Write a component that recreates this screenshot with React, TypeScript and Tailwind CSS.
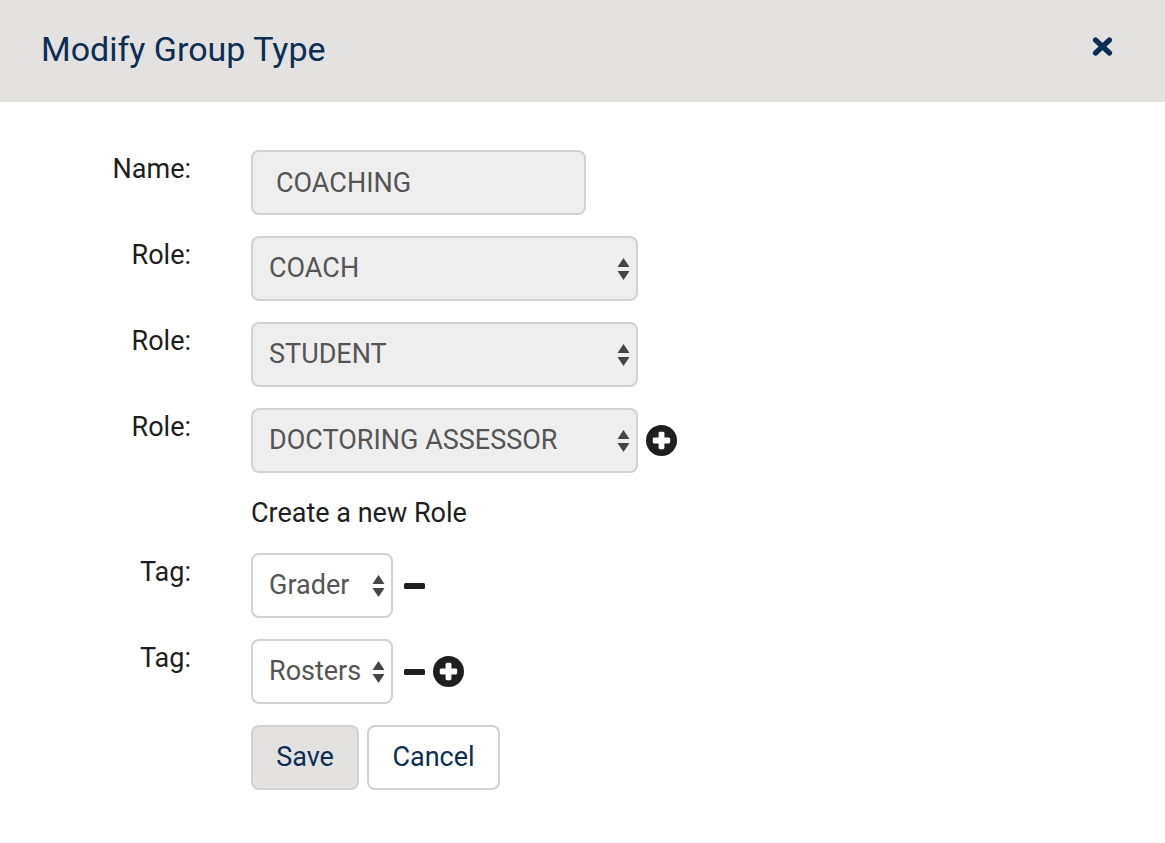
import React from "react";

const NAVY = "text-[#0e2d52]";

const SelectArrows = () => (
  <svg width="13" height="23" viewBox="0 0 13 23" className="fill-[#454545]">
    <polygon points="0.5,9.5 6.5,0.5 12.5,9.5" />
    <polygon points="0.5,13.5 12.5,13.5 6.5,22.5" />
  </svg>
);

const PlusCircle = () => (
  <svg width="31" height="31" viewBox="0 0 32 32">
    <circle cx="16" cy="16" r="16" fill="#1f1f1f" />
    <rect x="7" y="13" width="18" height="6" rx="1.5" fill="#fff" />
    <rect x="13" y="7" width="6" height="18" rx="1.5" fill="#fff" />
  </svg>
);

const Minus = () => (
  <svg width="21" height="6" viewBox="0 0 21 6">
    <rect x="0" y="0" width="21" height="6" rx="1.5" fill="#1f1f1f" />
  </svg>
);

const CloseIcon = () => (
  <svg width="21" height="19" viewBox="0 0 21 19">
    <path
      d="M3.5 3 L17.5 16 M17.5 3 L3.5 16"
      stroke="#0e2d52"
      strokeWidth="5.2"
      strokeLinecap="round"
    />
  </svg>
);

const Row = ({ label, children }: { label: string; children: React.ReactNode }) => (
  <div className="flex items-start">
    <div className="w-[191px] text-right text-[27px] leading-[38px] text-[#1e1e1e]">{label}</div>
    <div className="ml-[60px] flex items-center">{children}</div>
  </div>
);

const Select = ({
  value,
  width,
  filled,
}: {
  value: string;
  width: string;
  filled?: boolean;
}) => (
  <div className={`relative ${width}`}>
    <select
      defaultValue={value}
      className={`h-[65px] w-full appearance-none rounded-[8px] border-2 border-[#d2d2d2] pl-[16px] pr-[30px] text-[27px] text-[#555] outline-none ${
        filled ? "bg-[#eeeeee]" : "bg-white"
      }`}
    >
      <option>{value}</option>
    </select>
    <div className="pointer-events-none absolute right-[8px] top-1/2 -translate-y-1/2 flex">
      <SelectArrows />
    </div>
  </div>
);

const App = () => {
  return (
    <div className="h-[843px] w-full bg-white font-['Roboto','Liberation_Sans',sans-serif]">
      <div className="flex h-[102px] items-center justify-between bg-[#e3e2e0] pb-[4px] pl-[41px] pr-[52px]">
        <h1 className={`text-[34px] leading-none ${NAVY}`}>Modify Group Type</h1>
        <button className="mb-[6px] flex">
          <CloseIcon />
        </button>
      </div>

      <div className="flex flex-col gap-[21px] pt-[48px]">
        <Row label="Name:">
          <input
            readOnly
            value="COACHING"
            className="h-[65px] w-[335px] rounded-[8px] border-2 border-[#d2d2d2] bg-[#eeeeee] px-[23px] text-[27px] text-[#555] outline-none"
          />
        </Row>
        <Row label="Role:">
          <Select value="COACH" width="w-[387px]" filled />
        </Row>
        <Row label="Role:">
          <Select value="STUDENT" width="w-[387px]" filled />
        </Row>
        <Row label="Role:">
          <Select value="DOCTORING ASSESSOR" width="w-[387px]" filled />
          <div className="ml-[8px] flex">
            <PlusCircle />
          </div>
        </Row>

        <div className="ml-[251px] text-[27px] leading-[38px] text-[#1e1e1e]">Create a new Role</div>

        <Row label="Tag:">
          <Select value="Grader" width="w-[142px]" />
          <div className="ml-[11px] flex">
            <Minus />
          </div>
        </Row>
        <Row label="Tag:">
          <Select value="Rosters" width="w-[142px]" />
          <div className="ml-[11px] flex">
            <Minus />
          </div>
          <div className="ml-[8px] flex">
            <PlusCircle />
          </div>
        </Row>

        <div className="ml-[251px] flex gap-[8px]">
          <button
            className={`h-[65px] w-[108px] rounded-[8px] border-2 border-[#d2d2d2] bg-[#e3e2e0] text-[27px] ${NAVY}`}
          >
            Save
          </button>
          <button
            className={`h-[65px] w-[133px] rounded-[8px] border-2 border-[#d2d2d2] bg-white text-[27px] ${NAVY}`}
          >
            Cancel
          </button>
        </div>
      </div>
    </div>
  );
};

export default App;
